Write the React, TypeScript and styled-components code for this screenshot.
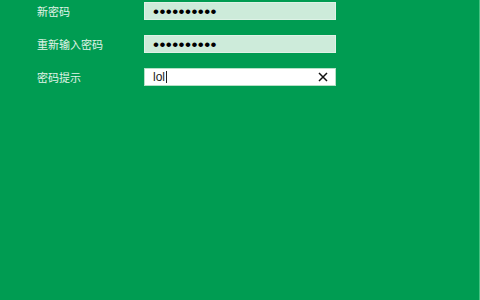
import React from "react";
import styled, { createGlobalStyle } from "styled-components";

const Global = createGlobalStyle`
  html, body { margin: 0; padding: 0; background: #009c52; }
  body { width: 480px; height: 300px; overflow: hidden; }
`;

const Page = styled.div`
  width: 480px;
  height: 300px;
  box-sizing: border-box;
  background: #009c52;
  border-right: 1px solid #46c382;
  padding: 2px 0 0 37px;
`;

const Form = styled.div`
  display: grid;
  grid-template-columns: 107px 192px;
  grid-auto-rows: 18px;
  row-gap: 15px;
  align-items: center;
`;

const Label = styled.div`
  font-family: "Noto Sans CJK SC", "Noto Sans", sans-serif;
  font-size: 11px;
  color: #e2f4e9;
  line-height: 18px;
  margin-top: -1px;
`;

const Field = styled.div<{ $active?: boolean }>`
  height: 18px;
  box-sizing: border-box;
  display: flex;
  align-items: center;
  padding: 0 7px 0 8px;
  background: ${(p) => (p.$active ? "#ffffff" : "#cdebda")};
  border: 1px solid ${(p) => (p.$active ? "#b5e0c6" : "#def2e6")};
`;

const Dots = styled.span`
  font-family: "Liberation Sans", sans-serif;
  font-size: 17px;
  letter-spacing: 0.45px;
  color: #000;
  line-height: 1;
  margin-top: 1px;
`;

const Value = styled.span`
  font-family: "Liberation Sans", sans-serif;
  font-size: 12px;
  color: #1a1a1a;
  line-height: 1;
`;

const Caret = styled.span`
  display: inline-block;
  width: 1px;
  height: 12px;
  background: #222;
  margin-left: 1px;
`;

const Clear = styled.svg`
  margin-left: auto;
  display: block;
`;

export default function App() {
  return (
    <>
      <Global />
      <Page>
        <Form>
          <Label>新密码</Label>
          <Field>
            <Dots>••••••••••</Dots>
          </Field>
          <Label>重新输入密码</Label>
          <Field>
            <Dots>••••••••••</Dots>
          </Field>
          <Label>密码提示</Label>
          <Field $active>
            <Value>lol</Value>
            <Caret />
            <Clear width="10" height="10" viewBox="0 0 10 10">
              <path d="M1 1 L9 9 M9 1 L1 9" stroke="#111" strokeWidth="1.5" fill="none" />
            </Clear>
          </Field>
        </Form>
      </Page>
    </>
  );
}
